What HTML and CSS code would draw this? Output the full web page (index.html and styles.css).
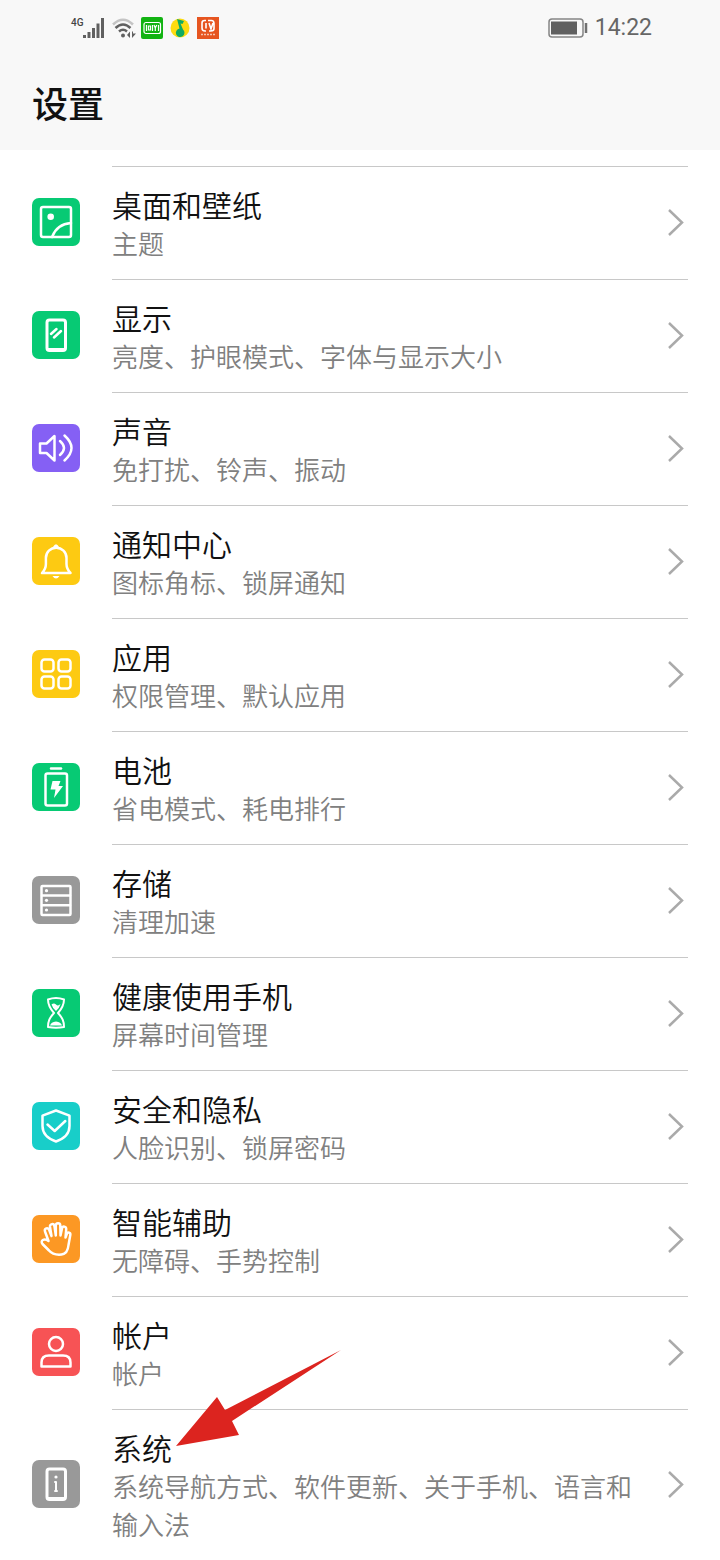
FILE: index.html
```html
<!DOCTYPE html>
<html lang="zh-CN">
<head>
<meta charset="utf-8">
<meta name="viewport" content="width=device-width, initial-scale=1">
<title>设置</title>
<link rel="stylesheet" href="styles.css">
</head>
<body>
<header class="top">
  <div class="status">
    <div class="status-left">
      <span class="network">4G</span>
      <svg class="signal" viewBox="0 0 22 22" aria-hidden="true"><path d="M1.500 18v3M6 15v6M10.500 11v10M15 6.500V21M19.500 1v20"/></svg>
      <svg class="status-icon" viewBox="0 0 24 24" aria-hidden="true">
        <path class="wifi-faint" d="M1 8.500Q11 -1 21 8.500"/>
        <path class="wifi" d="M3.500 12Q11 5 18.500 12M7 15.500q4-3.500 8 0"/>
        <circle class="dark" cx="11" cy="19.500" r="2"/>
        <path class="dark" d="M15 19l3-3.500V22zM20 15.500h1v2h3L20 22z"/>
      </svg>
      <svg class="status-icon" viewBox="0 0 24 24" aria-hidden="true">
        <rect x="1" y="1" width="22" height="22" rx="2" fill="#12b312"/>
        <rect x="4" y="6.500" width="16.500" height="11" rx="2" fill="none" stroke="#fff" stroke-width="1.200"/>
        <path d="M6.500 9v6M8.500 10h2v4h-2zM12.500 9v6M14 9l1.300 3 1.400-3M15.300 12v3M18.500 9v6" fill="none" stroke="#fff" stroke-width="1.200"/>
      </svg>
      <svg class="status-icon" viewBox="0 0 24 24" aria-hidden="true">
        <circle cx="12" cy="12" r="9.500" fill="#fddb10"/>
        <path d="M9 3l7 2-1.500 3-2-.5 2.500 6a4.300 4.300 0 1 1-3.500-1z" fill="#10ab62"/>
      </svg>
      <svg class="status-icon" viewBox="0 0 24 24" aria-hidden="true">
        <rect x="1" y="1" width="22" height="22" fill="#e65520"/>
        <path d="M10 4.500H8.500Q6 4.500 6 7v5q0 3 3 3h1M10 7v5.500M13 7l2 6 2-6M12 4.500h3.500q2.500 0 2.500 3v5q0 2.500-3 2.500h-2" fill="none" stroke="#fff" stroke-width="1.600"/>
        <path d="M5 18.500h14" stroke="#f7c4ae" stroke-width="1.500" stroke-dasharray="2 1"/>
      </svg>
    </div>
    <div class="status-right">
      <svg class="battery" viewBox="0 0 40 20" aria-hidden="true">
        <rect x="1" y="1" width="34" height="18" rx="3" fill="none" stroke="#858585" stroke-width="1.500"/>
        <rect x="3" y="3.500" width="26" height="13" fill="#606060"/>
        <path d="M38 5v10" stroke="#707070" stroke-width="2.500"/>
      </svg>
      <time class="clock">14:22</time>
    </div>
  </div>
  <h1 class="title">设置</h1>
</header>
<main>
<ul class="list">
  <li class="item"><a class="row" href="#wallpaper">
    <svg class="icon green" viewBox="0 0 48 48" aria-hidden="true"><rect x="9" y="9" width="30" height="30" rx="2"/><circle class="solid" cx="18.700" cy="18.700" r="3.300"/><path d="M20 39Q25 26 39 25"/></svg>
    <span class="body"><span class="text"><span class="name">桌面和壁纸</span><span class="desc">主题</span></span><svg class="chevron" viewBox="0 0 24 24" aria-hidden="true"><path d="M5 -1L18 11.500 5 24"/></svg></span></a></li>
  <li class="item"><a class="row" href="#display">
    <svg class="icon green" viewBox="0 0 48 48" aria-hidden="true"><rect class="thick" x="15" y="9" width="18.500" height="30.500" rx="2.500"/><path class="thick" d="M16 38.500h16"/><path d="M19 23l5.500-5M22 26.500l7-6.500"/></svg>
    <span class="body"><span class="text"><span class="name">显示</span><span class="desc">亮度、护眼模式、字体与显示大小</span></span><svg class="chevron" viewBox="0 0 24 24" aria-hidden="true"><path d="M5 -1L18 11.500 5 24"/></svg></span></a></li>
  <li class="item"><a class="row" href="#sound">
    <svg class="icon purple" viewBox="0 0 48 48" aria-hidden="true"><path d="M8 19.500h6.500L22.500 12v24.500L14.500 29H8zM28 17q8 7 0 14M32.500 11.500q14 12.500 0 25"/></svg>
    <span class="body"><span class="text"><span class="name">声音</span><span class="desc">免打扰、铃声、振动</span></span><svg class="chevron" viewBox="0 0 24 24" aria-hidden="true"><path d="M5 -1L18 11.500 5 24"/></svg></span></a></li>
  <li class="item"><a class="row" href="#notifications">
    <svg class="icon yellow" viewBox="0 0 48 48" aria-hidden="true"><path d="M10 36h28.500c-3-3-4-5-4-9v-6a10.300 10.300 0 0 0-20.600 0v6c0 4-1 6-3.900 9z"/><path class="solid" d="M21 10q3-5.500 6 0zM20.500 39h7q-3.500 5-7 0z"/></svg>
    <span class="body"><span class="text"><span class="name">通知中心</span><span class="desc">图标角标、锁屏通知</span></span><svg class="chevron" viewBox="0 0 24 24" aria-hidden="true"><path d="M5 -1L18 11.500 5 24"/></svg></span></a></li>
  <li class="item"><a class="row" href="#apps">
    <svg class="icon yellow" viewBox="0 0 48 48" aria-hidden="true"><rect x="9.500" y="9.500" width="12" height="12" rx="3"/><rect x="26.500" y="9.500" width="12" height="12" rx="3"/><rect x="9.500" y="26.500" width="12" height="12" rx="3"/><rect x="26.500" y="26.500" width="12" height="12" rx="3"/></svg>
    <span class="body"><span class="text"><span class="name">应用</span><span class="desc">权限管理、默认应用</span></span><svg class="chevron" viewBox="0 0 24 24" aria-hidden="true"><path d="M5 -1L18 11.500 5 24"/></svg></span></a></li>
  <li class="item"><a class="row" href="#battery">
    <svg class="icon green" viewBox="0 0 48 48" aria-hidden="true"><rect x="13.500" y="10.500" width="21.500" height="32" rx="2"/><path d="M19 5.500h10"/><path class="solid" d="M20.500 18h8l-2 5h4.500l-9 12 1.500-8.500h-5z"/></svg>
    <span class="body"><span class="text"><span class="name">电池</span><span class="desc">省电模式、耗电排行</span></span><svg class="chevron" viewBox="0 0 24 24" aria-hidden="true"><path d="M5 -1L18 11.500 5 24"/></svg></span></a></li>
  <li class="item"><a class="row" href="#storage">
    <svg class="icon gray" viewBox="0 0 48 48" aria-hidden="true"><rect x="9.500" y="10" width="29" height="29" rx="1"/><path d="M10 19.500h28M10 29.200h28"/><circle class="solid" cx="14.500" cy="14.700" r="1.600"/><circle class="solid" cx="14.500" cy="24.300" r="1.600"/><circle class="solid" cx="14.500" cy="34" r="1.600"/></svg>
    <span class="body"><span class="text"><span class="name">存储</span><span class="desc">清理加速</span></span><svg class="chevron" viewBox="0 0 24 24" aria-hidden="true"><path d="M5 -1L18 11.500 5 24"/></svg></span></a></li>
  <li class="item"><a class="row" href="#wellbeing">
    <svg class="icon green" viewBox="0 0 48 48" aria-hidden="true"><path class="thin" d="M16 10.500q8-3 16 0c0 5-1.500 8.500-6 13.500 4.500 5 6 8 6 14q-8 1.500-16 0c0-6 1.500-9 6-14-4.500-5-6-8.500-6-13.500z"/><path class="solid" d="M19.500 15.500q2.500-2 4.500 0t4.500-.5Q27.500 19 24 22q-3.500-3-4.500-6.500zM18 36.500q1-3.500 6-4 5 .5 6 4z"/></svg>
    <span class="body"><span class="text"><span class="name">健康使用手机</span><span class="desc">屏幕时间管理</span></span><svg class="chevron" viewBox="0 0 24 24" aria-hidden="true"><path d="M5 -1L18 11.500 5 24"/></svg></span></a></li>
  <li class="item"><a class="row" href="#security">
    <svg class="icon cyan" viewBox="0 0 48 48" aria-hidden="true"><path d="M24 8.500l13.500 5.200V24c0 8-5 12.500-13.500 15.500C15.500 36.500 10.500 32 10.500 24V13.700zM15.500 22.500l7.200 6.500 10.600-10"/></svg>
    <span class="body"><span class="text"><span class="name">安全和隐私</span><span class="desc">人脸识别、锁屏密码</span></span><svg class="chevron" viewBox="0 0 24 24" aria-hidden="true"><path d="M5 -1L18 11.500 5 24"/></svg></span></a></li>
  <li class="item"><a class="row" href="#assist">
    <svg class="icon orange" viewBox="0 0 48 48" aria-hidden="true"><path d="M16.500 26L13 16.500c-1-3.200 3-4.500 4.200-1.500l2.300 6-1.500-9c-.5-3.500 4-4 4.500-.5l1.300 9V10.500c0-3 4.400-3 4.500 0l.2 10 1.500-7c.6-3 4.400-2.300 4.200.8l-.7 8.200 1.300-3.500c1-2.500 4-1.500 3.500 1L36.500 30c-.5 6-2.500 9-7 9.500-5.500.6-9.500-.5-12.500-4l-6.500-6.500c-2.500-3 1.500-6.500 6-3z"/></svg>
    <span class="body"><span class="text"><span class="name">智能辅助</span><span class="desc">无障碍、手势控制</span></span><svg class="chevron" viewBox="0 0 24 24" aria-hidden="true"><path d="M5 -1L18 11.500 5 24"/></svg></span></a></li>
  <li class="item"><a class="row" href="#account">
    <svg class="icon red" viewBox="0 0 48 48" aria-hidden="true"><circle cx="24" cy="16" r="7"/><path d="M9.500 38.500v-4q0-7 7.500-7h14q7.500 0 7.500 7v4z"/></svg>
    <span class="body"><span class="text"><span class="name">帐户</span><span class="desc">帐户</span></span><svg class="chevron" viewBox="0 0 24 24" aria-hidden="true"><path d="M5 -1L18 11.500 5 24"/></svg></span></a></li>
  <li class="item"><a class="row" href="#system">
    <svg class="icon gray" viewBox="0 0 48 48" aria-hidden="true"><rect class="thick" x="15" y="9" width="18.500" height="30.500" rx="2.500"/><path class="thick" d="M16 38.500h16"/><path class="thin" d="M23 22h1v9M23 31h2"/><circle class="solid" cx="24" cy="17" r="1.600"/></svg>
    <span class="body"><span class="text"><span class="name">系统</span><span class="desc">系统导航方式、软件更新、关于手机、语言和输入法</span></span><svg class="chevron" viewBox="0 0 24 24" aria-hidden="true"><path d="M5 -1L18 11.500 5 24"/></svg></span></a>
    <svg class="pointer" viewBox="0 0 165 97" aria-hidden="true"><path d="M0 96L41 47l8 13L165 0 56 71l7 14z"/></svg></li>
</ul>
</main>
</body>
</html>
```
FILE: styles.css
```css
* {
  box-sizing: border-box;
}

body {
  margin: 0;
  background: #fff;
  color: #111;
  font-family: "Noto Sans CJK SC", sans-serif;
}

.top {
  padding: 8px 32px 20px;
  background: #f8f8f8;
}

.status {
  display: flex;
  justify-content: space-between;
  align-items: center;
  height: 40px;
  padding: 0 36px 0 39px;
}

.status-left,
.status-right {
  display: flex;
  align-items: center;
}

.status-left {
  gap: 4px;
}

.status-right {
  gap: 7px;
}

.network {
  align-self: flex-start;
  width: 8px;
  color: #444;
  font: 500 10px/14px Roboto, sans-serif;
}

.signal {
  width: 22px;
  height: 22px;
  margin-right: 3px;
  fill: none;
  stroke: #606060;
  stroke-width: 3;
}

.status-icon {
  width: 24px;
  height: 24px;
}

.wifi,
.wifi-faint {
  fill: none;
  stroke: #606060;
  stroke-width: 2.500;
}

.wifi-faint {
  stroke: #c4c4c4;
}

.dark {
  fill: #606060;
}

.battery {
  width: 40px;
  height: 20px;
}

.clock {
  color: #666;
  font: 23px/42px Roboto, sans-serif;
}

.title {
  margin: 26px 0 0;
  font-size: 36px;
  font-weight: 500;
  line-height: 56px;
}

.list {
  margin: 0;
  padding: 16px 32px 0;
  list-style: none;
}

.item {
  position: relative;
}

.row {
  display: flex;
  align-items: center;
  gap: 32px;
  color: inherit;
  text-decoration: none;
}

.icon {
  flex: none;
  width: 48px;
  height: 48px;
  margin-bottom: 1px;
  border-radius: 7px;
  fill: none;
  stroke: #fff;
  stroke-width: 2.500;
  stroke-linecap: round;
  stroke-linejoin: round;
}

.icon .thin {
  stroke-width: 2;
}

.icon .thick {
  stroke-width: 3;
}

.icon .solid {
  fill: #fff;
  stroke: none;
}

.green {
  background: #07ca74;
}

.purple {
  background: #8560f4;
}

.yellow {
  background: #fdca12;
}

.gray {
  background: #999;
}

.cyan {
  background: #18cec9;
}

.orange {
  background: #fc9824;
}

.red {
  background: #f75355;
}

.body {
  display: flex;
  flex: 1;
  align-items: center;
  gap: 16px;
  border-top: 1px solid #c8c8c8;
}

.text {
  flex: 1;
  padding: 17px 0;
}

.name,
.desc {
  display: block;
  font-weight: 350;
}

.name {
  font-size: 30px;
  line-height: 40px;
}

.desc {
  color: #808080;
  font-size: 26px;
  line-height: 38px;
}

.chevron {
  flex: none;
  width: 24px;
  height: 24px;
  overflow: visible;
  fill: none;
  stroke: #aaa;
  stroke-width: 2.500;
}

.pointer {
  position: absolute;
  top: -59px;
  left: 144px;
  width: 165px;
  height: 97px;
  fill: #dc241f;
  pointer-events: none;
}
```
